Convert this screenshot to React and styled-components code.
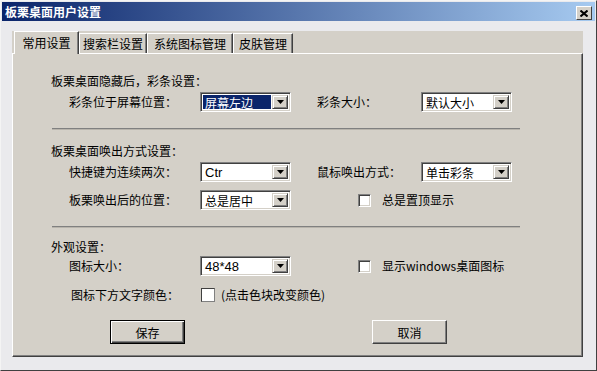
import React from "react";
import styled, { createGlobalStyle } from "styled-components";

const Global = createGlobalStyle`
  html, body {
    margin: 0;
    padding: 0;
    overflow: hidden;
  }
  body {
    font-family: "Noto Sans CJK SC", "Liberation Sans", sans-serif;
    font-size: 12px;
    color: #000;
  }
`;

const Window = styled.div`
  width: 597px;
  height: 371px;
  box-sizing: border-box;
  display: flex;
  flex-direction: column;
  background: #eaeaed;
  border-top: 1px solid #f4f4f4;
  border-left: 1px solid #f4f4f4;
  border-right: 1px solid #404040;
  border-bottom: 1px solid #404040;
  padding: 1px 1px 0 1px;
`;

const TitleBar = styled.div`
  height: 19px;
  display: flex;
  align-items: center;
  justify-content: space-between;
  padding: 0 3px 0 3px;
  background: linear-gradient(to right, #0a246a, #a6caf0);
`;

const Title = styled.span`
  color: #fff;
  font-weight: bold;
  font-size: 12px;
  line-height: 19px;
`;

const CloseButton = styled.div`
  width: 16px;
  height: 14px;
  box-sizing: border-box;
  background: #d4d0c8;
  border-top: 1px solid #fff;
  border-left: 1px solid #fff;
  border-right: 1px solid #404040;
  border-bottom: 1px solid #404040;
  display: flex;
  align-items: center;
  justify-content: center;
  margin-top: 3px;
`;

const Body = styled.div`
  flex: 1;
  display: flex;
  flex-direction: column;
  padding: 10px 12px 13px 10px;
`;

const TabControl = styled.div`
  flex: 1;
  display: flex;
  flex-direction: column;
  background: #d4d0c8;
`;

const TabStrip = styled.div`
  height: 22px;
  display: flex;
  align-items: flex-end;
  padding-left: 2px;
  position: relative;
  z-index: 1;
`;

const Tab = styled.div`
  box-sizing: border-box;
  width: ${(p) => p.$width}px;
  height: ${(p) => (p.$active ? "23px" : "20px")};
  margin-bottom: ${(p) => (p.$active ? "-1px" : "0")};
  display: flex;
  align-items: center;
  justify-content: center;
  background: #d4d0c8;
  border-top: 1px solid #fff;
  border-left: 1px solid #fff;
  border-right: 1px solid #404040;
  box-shadow: inset -1px 0 0 #808080;
  font-size: 12px;
  line-height: 14px;
  padding-top: ${(p) => (p.$active ? "0" : "1px")};
`;

const Panel = styled.div`
  flex: 1;
  box-sizing: border-box;
  border-top: 1px solid #fff;
  border-left: 1px solid #fff;
  border-right: 1px solid #404040;
  border-bottom: 1px solid #404040;
  box-shadow: inset -1px -1px 0 #808080;
  padding: 19px 0 0 38px;
  display: flex;
  flex-direction: column;
`;

const Heading = styled.div`
  height: 16px;
  line-height: 16px;
  margin-top: ${(p) => p.$top || 0}px;
`;

const Row = styled.div`
  display: grid;
  grid-template-columns: 131px 91px 26px 104px 91px;
  align-items: center;
  height: 20px;
  margin-left: 18px;
  margin-top: ${(p) => p.$top || 0}px;
`;

const Label = styled.span`
  line-height: 16px;
  white-space: nowrap;
`;

const Separator = styled.div`
  width: 468px;
  height: 2px;
  margin-left: 1px;
  margin-top: ${(p) => p.$top || 0}px;
  background: #808080;
  border-bottom: 1px solid #b8b4ac;
  box-sizing: border-box;
`;

const Combo = styled.div`
  height: 20px;
  box-sizing: border-box;
  border-top: 1px solid #808080;
  border-left: 1px solid #808080;
  border-right: 1px solid #fff;
  border-bottom: 1px solid #fff;
  box-shadow: inset 1px 1px 0 #404040, inset -1px -1px 0 #d4d0c8;
  background: #fff;
  display: flex;
  padding: 2px;
`;

const ComboText = styled.div`
  flex: 1;
  display: flex;
  align-items: center;
  padding-left: 2px;
  font-family: ${(p) =>
    p.$latin ? '"Liberation Sans", sans-serif' : '"Noto Sans CJK SC", sans-serif'};
  font-size: ${(p) => (p.$latin ? "13px" : "12px")};
  background: ${(p) => (p.$selected ? "#0a246a" : "#fff")};
  color: ${(p) => (p.$selected ? "#fff" : "#000")};
  margin-right: 1px;
`;

const DropButton = styled.div`
  width: 16px;
  box-sizing: border-box;
  background: #d4d0c8;
  border-top: 1px solid #d4d0c8;
  border-left: 1px solid #d4d0c8;
  border-right: 1px solid #404040;
  border-bottom: 1px solid #404040;
  box-shadow: inset 1px 1px 0 #fff, inset -1px -1px 0 #808080;
  display: flex;
  align-items: center;
  justify-content: center;
`;

const CheckCell = styled.div`
  grid-column: 4 / 6;
  display: flex;
  align-items: center;
  padding-left: 41px;
  gap: 11px;
`;

const CheckBox = styled.div`
  width: 13px;
  height: 13px;
  box-sizing: border-box;
  background: #fff;
  border-top: 1px solid #808080;
  border-left: 1px solid #808080;
  border-right: 1px solid #fff;
  border-bottom: 1px solid #fff;
  box-shadow: inset 1px 1px 0 #404040, inset -1px -1px 0 #d4d0c8;
`;

const ColorRow = styled.div`
  display: flex;
  align-items: center;
  height: 20px;
  margin-left: 20px;
  margin-top: ${(p) => p.$top || 0}px;
`;

const ColorLabel = styled.span`
  width: 130px;
  line-height: 16px;
`;

const Swatch = styled.div`
  width: 14px;
  height: 14px;
  box-sizing: border-box;
  background: #fff;
  border-top: 1px solid #404040;
  border-left: 1px solid #404040;
  border-right: 1px solid #808080;
  border-bottom: 1px solid #808080;
  margin-right: 6px;
`;

const ButtonRow = styled.div`
  display: flex;
  margin-top: 15px;
  margin-left: 59px;
  gap: 187px;
`;

const Button = styled.div`
  width: 75px;
  height: 24px;
  box-sizing: border-box;
  display: flex;
  align-items: center;
  justify-content: center;
  background: #d4d0c8;
  border: 1px solid;
  border-color: ${(p) => (p.$default ? "#000" : "#fff #404040 #404040 #fff")};
  box-shadow: ${(p) =>
    p.$default
      ? "inset 1px 1px 0 #fff, inset -1px -1px 0 #404040, inset -2px -2px 0 #808080"
      : "inset -1px -1px 0 #808080"};
`;

function Triangle() {
  return (
    <svg width="7" height="4" viewBox="0 0 7 4">
      <path d="M0 0H7L3.5 4Z" fill="#000" />
    </svg>
  );
}

function Select({ value, selected, latin }) {
  return (
    <Combo>
      <ComboText $selected={selected} $latin={latin}>
        {value}
      </ComboText>
      <DropButton>
        <Triangle />
      </DropButton>
    </Combo>
  );
}

export default function App() {
  return (
    <>
      <Global />
      <Window>
        <TitleBar>
          <Title>板栗桌面用户设置</Title>
          <CloseButton>
            <svg width="8" height="7" viewBox="0 0 8 7">
              <path d="M0.5 0.5L7.5 6.5M7.5 0.5L0.5 6.5" stroke="#000" strokeWidth="2" />
            </svg>
          </CloseButton>
        </TitleBar>
        <Body>
          <TabControl>
            <TabStrip>
              <Tab $active $width={65}>常用设置</Tab>
              <Tab $width={68}>搜索栏设置</Tab>
              <Tab $width={86}>系统图标管理</Tab>
              <Tab $width={60}>皮肤管理</Tab>
            </TabStrip>
            <Panel>
              <Heading>板栗桌面隐藏后，彩条设置：</Heading>
              <Row $top={3}>
                <Label>彩条位于屏幕位置：</Label>
                <Select value="屏幕左边" selected />
                <span />
                <Label>彩条大小：</Label>
                <Select value="默认大小" />
              </Row>
              <Separator $top={16} />
              <Heading $top={13}>板栗桌面唤出方式设置：</Heading>
              <Row $top={3}>
                <Label>快捷键为连续两次：</Label>
                <Select value="Ctr" latin />
                <span />
                <Label>鼠标唤出方式：</Label>
                <Select value="单击彩条" />
              </Row>
              <Row $top={8}>
                <Label>板栗唤出后的位置：</Label>
                <Select value="总是居中" />
                <CheckCell>
                  <CheckBox />
                  <Label>总是置顶显示</Label>
                </CheckCell>
              </Row>
              <Separator $top={16} />
              <Heading $top={11}>外观设置：</Heading>
              <Row $top={1}>
                <Label>图标大小：</Label>
                <Select value="48*48" latin />
                <CheckCell>
                  <CheckBox />
                  <Label>显示windows桌面图标</Label>
                </CheckCell>
              </Row>
              <ColorRow $top={9}>
                <ColorLabel>图标下方文字颜色：</ColorLabel>
                <Swatch />
                <Label>(点击色块改变颜色)</Label>
              </ColorRow>
              <ButtonRow>
                <Button $default>保存</Button>
                <Button>取消</Button>
              </ButtonRow>
            </Panel>
          </TabControl>
        </Body>
      </Window>
    </>
  );
}
